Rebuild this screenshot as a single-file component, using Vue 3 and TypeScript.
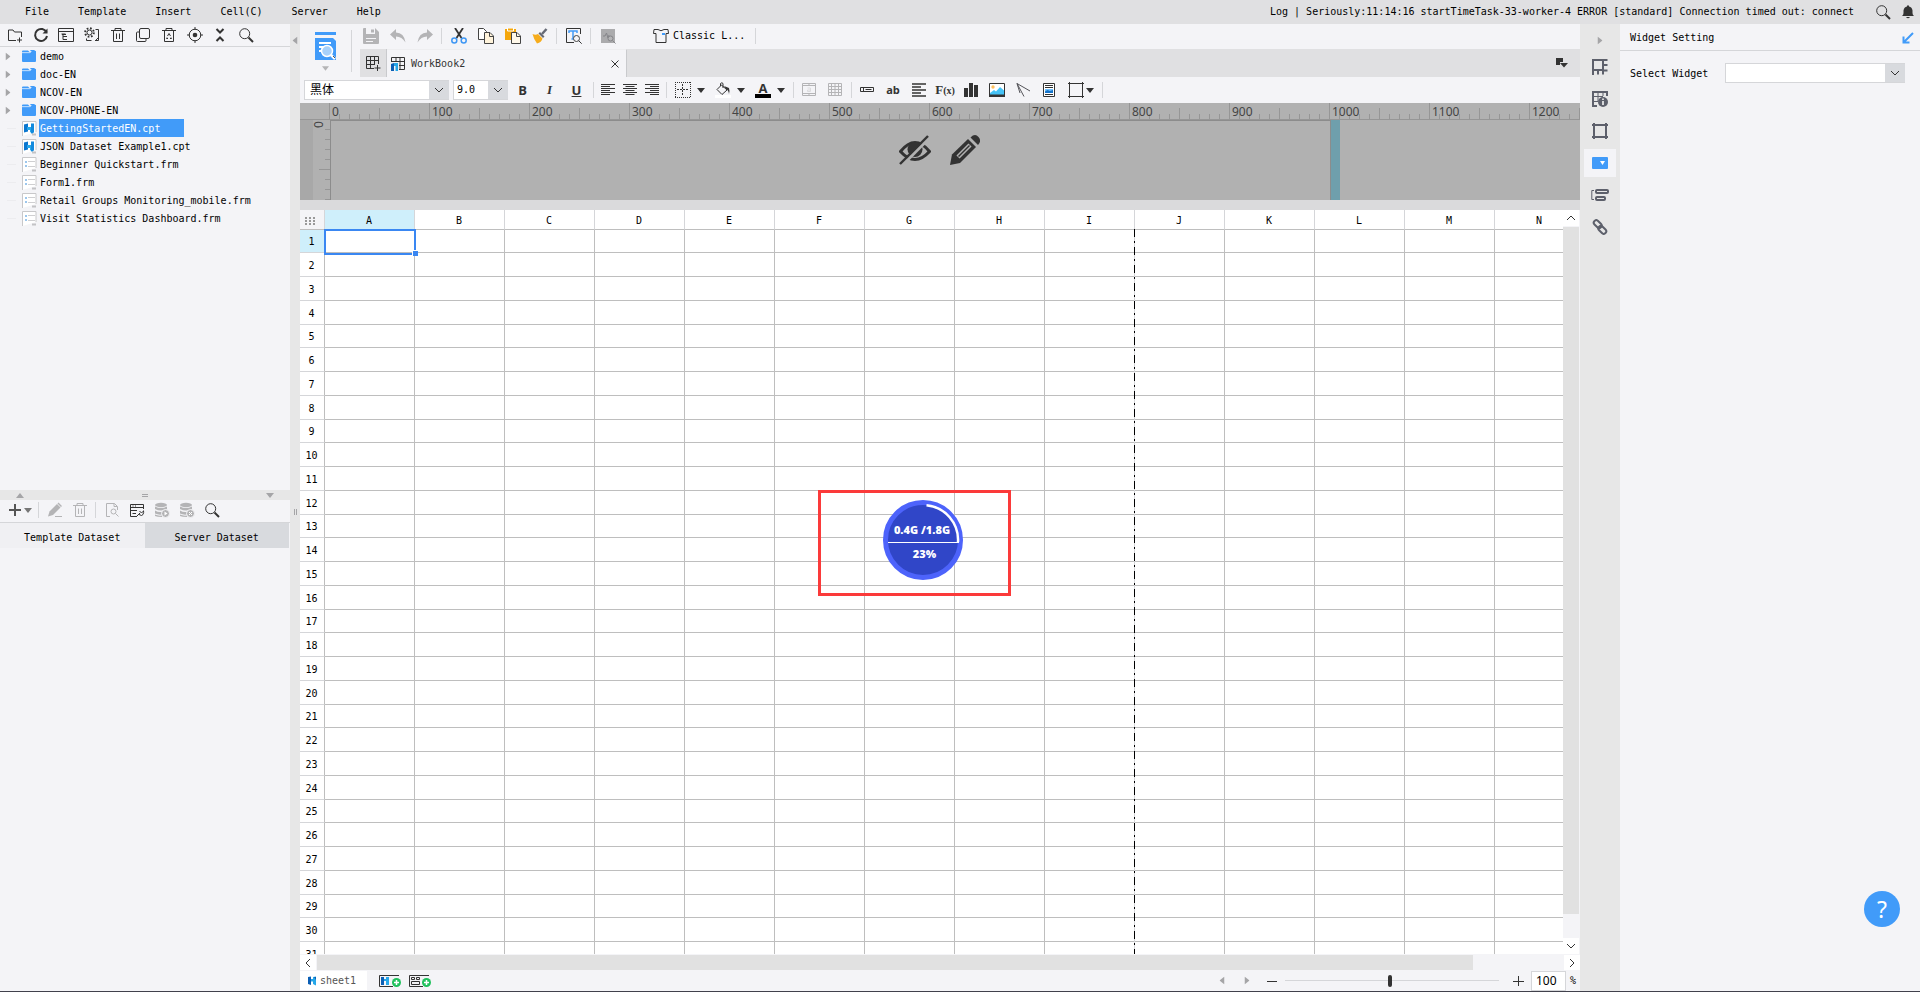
<script setup lang="ts">
import { ref } from 'vue'

interface TreeItem {
  name: string
  icon: string
  folder?: boolean
}

const menus = ['File', 'Template', 'Insert', 'Cell(C)', 'Server', 'Help']

const treeTools = [
  ['folder-add', 'New folder'],
  ['refresh', 'Refresh'],
  ['explorer', 'Show in explorer'],
  ['settings-file', 'File settings'],
  ['trash', 'Delete'],
  ['copies', 'Duplicate'],
  ['recycle', 'Recycle bin'],
  ['target', 'Locate'],
  ['collapse', 'Collapse all'],
  ['search', 'Search'],
]

const tree: TreeItem[] = [
  { name: 'demo', icon: 'folder', folder: true },
  { name: 'doc-EN', icon: 'folder', folder: true },
  { name: 'NCOV-EN', icon: 'folder', folder: true },
  { name: 'NCOV-PHONE-EN', icon: 'folder', folder: true },
  { name: 'GettingStartedEN.cpt', icon: 'cpt' },
  { name: 'JSON Dataset Example1.cpt', icon: 'cpt' },
  { name: 'Beginner Quickstart.frm', icon: 'frm' },
  { name: 'Form1.frm', icon: 'frm' },
  { name: 'Retail Groups Monitoring_mobile.frm', icon: 'frm' },
  { name: 'Visit Statistics Dashboard.frm', icon: 'frm' },
]
const selectedFile = ref('GettingStartedEN.cpt')

const dataTab = ref('Template Dataset')
const dataTabs = ['Template Dataset', 'Server Dataset']

const elementTools = [
  ['widget', 'Widget'],
  ['text-ab', 'Text'],
  ['rich', 'Rich text'],
  ['formula', 'Formula'],
  ['chart', 'Chart'],
  ['image', 'Image'],
  ['slope', 'Slope line'],
  ['subreport', 'Sub report'],
]

const railTools = [
  ['cell-el', 'Cell element'],
  ['cell-attr', 'Cell attributes'],
  ['float', 'Floating element'],
  ['widget-set', 'Widget setting'],
  ['condition', 'Condition attributes'],
  ['link', 'Hyperlink'],
]
const railActive = ref('widget-set')

const marks = Array.from({ length: 13 }, (_, i) => i * 100)
const columns = 'ABCDEFGHIJKLMN'.split('')
const rows = Array.from({ length: 31 }, (_, i) => i + 1)

const family = ref('黑体')
const size = ref('9.0')
const widget = ref('')
const zoom = ref('100')
const zoomPos = ref(49)
</script>

<template>
  <svg class="defs" aria-hidden="true">
    <symbol id="i-folder-add" viewBox="0 0 16 16"><path d="M9 13.500H1.500V3H6l1.500 2h7V10M12.500 10.500v5M10 13h5" class="s" /></symbol>
    <symbol id="i-refresh" viewBox="0 0 16 16"><path d="M13.600 5.500A6 6 0 1 0 14 9" class="s w" /><path d="M14.500 1.500v5h-5z" class="f" /></symbol>
    <symbol id="i-explorer" viewBox="0 0 16 16"><path d="M.5 1.500h15v13H.5zM.5 4.500h15M3.500 7h4M5 7v5.500h4M5 9.500h4" class="s" /><path d="M4 7.500h4M7 9.500h2M7 12.500h2" class="s" /></symbol>
    <symbol id="i-settings-file" viewBox="0 0 16 16"><circle cx="5.500" cy="5.500" r="2.500" class="s" /><circle cx="5.500" cy="5.500" r="4.300" class="s w" stroke-dasharray="1.700 1.680" /><path d="M11.500 2.500h3v11H11M2.500 11.500v2h5M11 14l3-3" class="s" /></symbol>
    <symbol id="i-trash" viewBox="0 0 16 16"><path d="M1 3.500h14M5 3V1.500h6V3M3.500 4v10.500h9V4M6.500 6.500V12M9.500 6.500V12" class="s" /></symbol>
    <symbol id="i-copies" viewBox="0 0 16 16"><rect x="4.500" y="1.500" width="10" height="10" rx="1.500" class="s" /><path d="M4 5H2.500Q1.500 5 1.500 6v7.500q0 1 1 1H10q1 0 1-1V12" class="s" /></symbol>
    <symbol id="i-recycle" viewBox="0 0 16 16"><path d="M1 3.500h14M5 3V1.500h6V3M3.500 4v10.500h9V4" class="s" /><path d="M6.500 9L8 6.500 9.500 9M10 10.500l.5 1H9M7 11.500H5.500l.5-1" class="s" /></symbol>
    <symbol id="i-target" viewBox="0 0 16 16"><circle cx="8" cy="8" r="5.800" class="s" /><circle cx="8" cy="8" r="2.300" class="f" /><path d="M8 0v3M8 13v3M0 8h3M13 8h3" class="s" /></symbol>
    <symbol id="i-collapse" viewBox="0 0 16 16"><path d="M4.500 2L8 5.500 11.500 2M4.500 14L8 10.500l3.500 3.500" class="s w" /></symbol>
    <symbol id="i-search" viewBox="0 0 16 16"><circle cx="6.700" cy="6.700" r="5" class="s" /><path d="M10.500 10.500l4.500 4.500" class="s w" /></symbol>
    <symbol id="i-folder" viewBox="0 0 16 14"><path d="M1 2.500q0-1 1-1h5L8.500 3H1zM9 1h4l2 1.200V3h-4.500z" fill="#419bf9" /><path d="M1 3.500h8l1.500-1H15V12q0 1-1 1H2q-1 0-1-1z" fill="#419bf9" /><path d="M1 3.700h8l1.500-1.200" fill="none" stroke="#bfe0ff" stroke-width=".8" /></symbol>
    <symbol id="i-cpt" viewBox="0 0 16 16"><path d="M1.500 16V1.500H15V12" fill="#fff" stroke="#c8c8ca" /><path d="M3 4.500l4-1v8l-4 1z" fill="#0b76cf" /><path d="M6 7h4l2-1v8l-3-2v-2H6z" fill="#26a7e8" /><path d="M10 3.500h3v9l-3 1z" fill="#1189dd" /><path d="M11 14.500h4" stroke="#c3c3c5" stroke-width="2" /></symbol>
    <symbol id="i-frm" viewBox="0 0 16 16"><path d="M1.500 16V1.500H15V12" fill="#fff" stroke="#c8c8ca" /><path d="M5 5v2M5 9v2" stroke="#3a8fdb" /><path d="M7 5.500h7M7 10.500h7" stroke="#cfcfd1" /><path d="M11 14.500h4" stroke="#c3c3c5" stroke-width="2" /></symbol>
    <symbol id="i-pencil-s" viewBox="0 0 16 16"><path d="M1 14.500l1.500-5L10 2l3.500 3.500L6 13z" class="g" /><path d="M10.500 1.500l1-1 3.500 3.500-1 1zM8 14h7v1H8z" class="g" /></symbol>
    <symbol id="i-trash-g" viewBox="0 0 16 16"><path d="M1 3.500h14M5 3V1.500h6V3M3.500 4v10.500h9V4M6.500 6.500V12M9.500 6.500V12" class="gs" /></symbol>
    <symbol id="i-doc-find" viewBox="0 0 16 16"><path d="M6 14.500H2.500v-13h8l3 3V8M10 1.500v3h3" class="gs" /><circle cx="9.500" cy="9.500" r="2.500" class="gs" /><path d="M11.500 11.500l3 3" class="gs" /></symbol>
    <symbol id="i-data-edit" viewBox="0 0 16 16"><path d="M8 14.500H1.500v-12h13V7M1.500 5.500h13M1.500 8.500H8M3.500 11.500H7M3.500 4h1M6 4h1" class="s" /><path d="M8 14l3-3M10.500 9l2 2 2-2M10 12.500q3 2 4 0t.5-4" class="s" /></symbol>
    <symbol id="i-db-run" viewBox="0 0 16 16"><ellipse cx="7" cy="3" rx="6" ry="2.200" class="g" /><path d="M1 4.500q6 3 12 0V7q-6 3-12 0zM1 8.500q3 2 7 1.500v2.500q-4 .5-7-1zM1 12.500q3 1.500 7 1v1.500q-5 0-7-1z" class="g" /><circle cx="11.500" cy="11.500" r="4" fill="#b4b4b6" stroke="#f4f4f7" /><path d="M10.500 9.500l3 2-3 2z" fill="#fff" /></symbol>
    <symbol id="i-db-del" viewBox="0 0 16 16"><ellipse cx="7" cy="3" rx="6" ry="2.200" class="g" /><path d="M1 4.500q6 3 12 0V7q-6 3-12 0zM1 8.500q3 2 7 1.500v2.500q-4 .5-7-1zM1 12.500q3 1.500 7 1v1.500q-5 0-7-1z" class="g" /><circle cx="11.500" cy="11.500" r="4" fill="#b4b4b6" stroke="#f4f4f7" /><path d="M10 10l3 3M13 10l-3 3" stroke="#fff" /></symbol>
    <symbol id="i-report" viewBox="0 0 22 30"><path d="M0 1h21v3H0z" fill="#419bf9" /><path d="M0 7h18l3 3v19H0z" fill="#419bf9" /><path d="M4 12h12M4 16h8M4 20h3" stroke="#fff" stroke-width="2" /><circle cx="12" cy="20" r="5.500" fill="#a8d1fa" stroke="#fff" stroke-width="1.500" /><path d="M16 24l4 4" stroke="#fff" stroke-width="2.500" /><path d="M18 25l2 2" stroke="#555" /></symbol>
    <symbol id="i-save" viewBox="0 0 16 16"><path d="M0 1q0-1 1-1h11l4 4v11q0 1-1 1H1q-1 0-1-1z" fill="#b4b4b6" /><path d="M3 0h9v6H3z" fill="#f4f4f7" /><path d="M8 1.500h3v3H8z" fill="#b4b4b6" /><path d="M3 10.500h10M3 13.500h7" stroke="#f4f4f7" /></symbol>
    <symbol id="i-undo" viewBox="0 0 16 16"><path d="M0 6.500L6 1v3.500q8 0 9.500 10Q12 8.500 6 8.500V12z" fill="#b4b4b6" /></symbol>
    <symbol id="i-redo" viewBox="0 0 16 16"><path d="M16 6.500L10 1v3.500q-8 0-9.500 10Q4 8.500 10 8.500V12z" fill="#b4b4b6" /></symbol>
    <symbol id="i-cut" viewBox="0 0 16 16"><path d="M4 0l6.500 10M12 0L5.500 10" stroke="#333" stroke-width="1.800" /><circle cx="3.300" cy="12.500" r="2.500" fill="none" stroke="#3f97f4" stroke-width="1.500" /><circle cx="12.700" cy="12.500" r="2.500" fill="none" stroke="#3f97f4" stroke-width="1.500" /></symbol>
    <symbol id="i-copy" viewBox="0 0 16 16"><path d="M.5.5h5l3 3v8h-8z" fill="#fff" stroke="#444" /><path d="M6.500 4.500H12l3.500 3.500v7.500h-9z" fill="#fff3db" stroke="#444" /><path d="M11.500 4.500v4h4" fill="none" stroke="#444" /></symbol>
    <symbol id="i-paste" viewBox="0 0 16 16"><path d="M0 1h11v11H0z" fill="#f5a70c" /><path d="M2.500 0h6v3h-6z" fill="#f5a70c" stroke="#fff" /><path d="M6.500 4.500H12l3.500 3.500v7.500h-9z" fill="#fff8ea" stroke="#444" /><path d="M11.500 4.500v4h4" fill="none" stroke="#444" /></symbol>
    <symbol id="i-brush" viewBox="0 0 16 16"><path d="M14.500 1L10 6" stroke="#666a75" stroke-width="2.500" /><path d="M8 4l4.500 4.500L11 10 6.500 5.500z" fill="#666a75" /><path d="M.5 6q3 1.500 5.500 0l4.500 4.500q-1 4-5.500 5Q2 12 .5 6z" fill="#f6ac1c" /></symbol>
    <symbol id="i-find-t" viewBox="0 0 16 16"><path d="M14.500 6V.5H.5v14H8" class="s" /><path d="M3 5V3h8v2M7 3v8M5.500 11H8" fill="none" stroke="#419bf9" stroke-width="1.500" /><circle cx="10.500" cy="10.500" r="3" fill="#f4f4f7" stroke="#444" /><path d="M12.700 12.700l3 3" class="s" /></symbol>
    <symbol id="i-log" viewBox="0 0 16 16"><path d="M1 1h14v14H1z" fill="#ababad" /><path d="M3 8h2l1.500-3L8 10l1-3" fill="none" stroke="#858589" /><circle cx="10.500" cy="10.500" r="2.500" fill="#b4b4b6" stroke="#858589" /><path d="M12.500 12.500l3 3" stroke="#858589" /></symbol>
    <symbol id="i-shirt" viewBox="0 0 16 16"><path d="M1 1.500h4q3 2.500 6 0h4l.5 4H13v9H3v-9H.5z" class="s" /><path d="M9 6h3" stroke="#419bf9" stroke-width="2" /></symbol>
    <symbol id="i-tab-add" viewBox="0 0 16 16"><path d="M9 13.500H1.500v-12h12V9M1.500 5.500h12M1.500 9.500H10M5.500 1.500v12M9.500 1.500V10M12.500 10v6M9.500 13h6" class="s" /></symbol>
    <symbol id="i-tab-book" viewBox="0 0 16 16"><path d="M1.500 6V1.500h13v12H9M1.500 5.500h13M6 1.500V6M10 1.500v12M9 9.500h5.500" class="s" /><path d="M1 8l3-1v8H1z" fill="#0b5fb5" /><path d="M4 7h4v8H5.500v-5H4z" fill="#26a7e8" /></symbol>
    <symbol id="i-close" viewBox="0 0 10 10"><path d="M1.500 1.500l7 7M8.500 1.500l-7 7" class="s" /></symbol>
    <symbol id="i-tab-list" viewBox="0 0 12 12"><path d="M0 1h7v4H4v3H0zM4 6h8l-4 4.500z" class="f" /></symbol>
    <symbol id="i-left" viewBox="0 0 16 14"><path d="M1 1.500h14M1 3.500h9M1 5.500h14M1 7.500h9M1 9.500h14M1 11.500h9" class="s" /></symbol>
    <symbol id="i-center" viewBox="0 0 16 14"><path d="M1 1.500h14M3.500 3.500h9M1 5.500h14M3.500 7.500h9M1 9.500h14M3.500 11.500h9" class="s" /></symbol>
    <symbol id="i-right" viewBox="0 0 16 14"><path d="M1 1.500h14M6 3.500h9M1 5.500h14M6 7.500h9M1 9.500h14M6 11.500h9" class="s" /></symbol>
    <symbol id="i-border" viewBox="0 0 16 16"><path d="M0 .5h16M0 15.500h16M.5 0v16M15.500 0v16" class="s" stroke-dasharray="1 1" /><path d="M2 7.500h12M7.500 2v12" class="s" stroke-dasharray="2 1" /></symbol>
    <symbol id="i-fill" viewBox="0 0 16 16"><path d="M2 7.500L6.500 3l5.500 5-5 4.500zM5.500 4V1.500q1.500-1.500 2.500 0V6" class="s" /><path d="M9 4l5 2q1 3 0 6-.5-4-3-5z" class="f" /><path d="M0 13h16v3H0z" fill="#fff" /></symbol>
    <symbol id="i-merge" viewBox="0 0 16 16"><path d="M1.500 1.500h13v12h-13zM1.500 3.500h13M1.500 11.500h13M8 1.500V4M8 11v2.500" class="gs" /><path d="M6.500 6h3v3.500h-3V8h3" fill="none" stroke="#dcdcde" /></symbol>
    <symbol id="i-split" viewBox="0 0 16 16"><path d="M1.500 1.500h13v12h-13zM1.500 4.500h13M1.500 7.500h13M1.500 10.500h13M4.500 2v12M8 2v12M11.500 2v12" class="gs" /></symbol>
    <symbol id="i-widget" viewBox="0 0 16 16"><path d="M1.500 5.500h13v4h-13zM4.500 6v4M6.500 7.500h6" class="s" /></symbol>
    <symbol id="i-rich" viewBox="0 0 16 16"><path d="M1 2h14M1 5h9M1 8h14M1 11h9M1 14h14" class="s t" /></symbol>
    <symbol id="i-chart" viewBox="0 0 16 16"><path d="M1 6h4v9H1zM6 1h4v14H6zM11 3h4v12h-4z" class="f" /></symbol>
    <symbol id="i-image" viewBox="0 0 16 16"><path d="M.5 1.500h15v13H.5z" fill="#fff" stroke="#333" /><circle cx="4" cy="5" r="1.700" fill="#ffc05c" /><path d="M1 13V11l4-3 2 1.500L11 5l4 3.500V13z" fill="#45c3f7" /><path d="M0 12.500h16V15H0z" class="f" /></symbol>
    <symbol id="i-slope" viewBox="0 0 16 16"><path d="M9 14.500L2 1.500 15 9M2 1.500L5 11" fill="none" stroke="#55555a" /></symbol>
    <symbol id="i-subreport" viewBox="0 0 16 16"><path d="M2.500 1.500h11v13h-11z" fill="#fff" stroke="#333" /><path d="M4 3.500h8M4 5.500h8M4 12.500h8" class="s" /><path d="M4 7h8v4H4z" fill="#6fc0ff" /><path d="M4 11V9.500L6.500 8 9 9l3-1v3z" fill="#1673c8" /></symbol>
    <symbol id="i-shape" viewBox="0 0 16 16"><path d="M1.500 0v16M14.500 0v16M0 1.500h16M0 14.500h16" class="s" /></symbol>
    <symbol id="i-eye-off" viewBox="0 0 32 30"><path d="M1.500 16.500Q16-1.500 30.500 16.500 16 32.500 1.500 16.500z" fill="none" stroke="#333" stroke-width="3" /><circle cx="16" cy="14.500" r="7.500" fill="#333" /><path d="M3.500 30L30 3.500" stroke="#b1b1b1" stroke-width="3" /><path d="M1 29L29 1" stroke="#333" stroke-width="2.400" /></symbol>
    <symbol id="i-pencil" viewBox="0 0 30 30"><path d="M0 30l2-10.500L18 4l8 8L10 28z" fill="#333" /><path d="M20.500 2.500q4.500-4.500 8-.5t-.5 8z" fill="#333" /><path d="M8 22L20 10" stroke="#b1b1b1" stroke-width="4.500" /><path d="M8.500 21.500l11-11" stroke="#333" stroke-width="1.400" /></symbol>
    <symbol id="i-cell-el" viewBox="0 0 16 16"><path d="M1 16V1h10v10H1M15.500 1H11M15.500 6H11M15.500 11.500H11M6 11v4.500M11 11v4.500" class="r" /></symbol>
    <symbol id="i-cell-attr" viewBox="0 0 16 16"><path d="M5 15H1V1h14v4" class="r" /><path d="M6 2v8M11 2v3M2 5.500h9M2 10.500h4" stroke="#5d606b" /><circle cx="11" cy="11" r="5" fill="#5d606b" /><path d="M11 10v4M11 7.500V9" stroke="#fff" stroke-width="1.500" /></symbol>
    <symbol id="i-float" viewBox="0 0 16 16"><path d="M2 2h12v12H2zM0 2h2M2 0v2M14 0v2h2M2 16v-2H0M14 16v-2h2" class="r" /></symbol>
    <symbol id="i-widget-set" viewBox="0 0 16 16"><rect y="2" width="16" height="12" rx="1" fill="#419bf9" /><path d="M8 6h5l-2.500 4z" fill="#fff" /></symbol>
    <symbol id="i-condition" viewBox="0 0 18 14"><path d="M3 2.500H.8v9H3" fill="none" stroke="#5d606b" /><rect x="5" y="2" width="12" height="3" rx="1" class="r" /><rect x="5" y="9" width="9" height="3" rx="1" class="r" /></symbol>
    <symbol id="i-link" viewBox="0 0 16 16"><rect x="1.200" y="2.600" width="9" height="5" rx="2.500" transform="rotate(45 5.700 5.100)" class="r" /><rect x="5.800" y="8.400" width="9" height="5" rx="2.500" transform="rotate(45 10.300 10.900)" class="r" /></symbol>
    <symbol id="i-bell" viewBox="0 0 12 14"><path d="M0 11q1.500-1 1.500-3V5.500Q2 2 5 1.500V.5h2v1q3 .5 3.500 4V8q0 2 1.500 3zM4 12h4q-2 2.500-4 0z" class="f" /></symbol>
    <symbol id="i-pin" viewBox="0 0 12 12"><path d="M11 1L2 10M1.500 4.500v6h6" fill="none" stroke="#419bf9" stroke-width="2" /></symbol>
    <symbol id="i-chev" viewBox="0 0 10 6"><path d="M1 1l4 4 4-4" class="s" /></symbol>
    <symbol id="i-tri" viewBox="0 0 8 5"><path d="M0 0h8L4 5z" fill="currentColor" /></symbol>
    <symbol id="i-sheet" viewBox="0 0 10 10"><path d="M1 1l3-.5V9L1 8z" fill="#0b5fb5" /><path d="M4 3h2V1l3-.5V9.500L6 8V5.500H4z" fill="#26a7e8" /><path d="M7 1l2 0v3z" fill="#0b5fb5" /></symbol>
    <symbol id="i-add-sheet" viewBox="0 0 22 12"><path d="M20 .5H.5v11H14" class="s" /><path d="M2 2h3v8H2z" fill="#0b5fb5" /><path d="M5 4h2V2h3v8H7V6H5z" fill="#26a7e8" /><circle cx="17.500" cy="7.500" r="4.500" fill="#1fc15c" /><path d="M17.500 5v5M15 7.500h5" stroke="#fff" stroke-width="1.500" /></symbol>
    <symbol id="i-add-form" viewBox="0 0 22 12"><path d="M20 .5H.5v11H14M2.500 2.500h3v2h-3zM7.500 2.500h3v2h-3zM2.500 6.500h8v3h-8z" class="s" /><circle cx="17.500" cy="7.500" r="4.500" fill="#1fc15c" /><path d="M17.500 5v5M15 7.500h5" stroke="#fff" stroke-width="1.500" /></symbol>
    <symbol id="i-plus" viewBox="0 0 12 12"><path d="M6 0v12M0 6h12" stroke="#555" stroke-width="2" /></symbol>
    <symbol id="i-plus-thin" viewBox="0 0 12 12"><path d="M6.500 1v10M1 6.500h11" class="s" /></symbol>
    <symbol id="i-minus" viewBox="0 0 12 12"><path d="M1 6.500h10" class="s" /></symbol>
  </svg>

  <div class="app">
    <header class="menubar">
      <nav class="menus">
        <button v-for="m in menus" :key="m">{{ m }}</button>
      </nav>
      <p class="log">Log | Seriously:11:14:16 startTimeTask-33-worker-4 ERROR [standard] Connection timed out: connect</p>
      <button class="find" aria-label="Search"><svg class="ic"><use href="#i-search" /></svg></button>
      <button aria-label="Notifications"><svg class="bell"><use href="#i-bell" /></svg></button>
    </header>

    <aside class="left">
      <div class="tree-tools">
        <button v-for="[id, label] in treeTools" :key="id" :aria-label="label">
          <svg class="ic"><use :href="`#i-${id}`" /></svg>
        </button>
      </div>
      <ul class="tree">
        <li v-for="item in tree" :key="item.name">
          <svg v-if="item.folder" class="twist"><use href="#i-tri" /></svg>
          <span v-else class="twist-gap" />
          <svg class="ic"><use :href="`#i-${item.icon}`" /></svg>
          <button :class="{ picked: selectedFile === item.name }" @click="selectedFile = item.name">{{ item.name }}</button>
        </li>
      </ul>
      <div class="hsplit">
        <svg class="tri up"><use href="#i-tri" /></svg>
        <span class="grip" />
        <svg class="tri"><use href="#i-tri" /></svg>
      </div>
      <div class="data-tools">
        <button class="add" aria-label="Add dataset">
          <svg class="plus"><use href="#i-plus" /></svg><svg class="drop"><use href="#i-tri" /></svg>
        </button>
        <span class="sep" />
        <button aria-label="Edit"><svg class="ic"><use href="#i-pencil-s" /></svg></button>
        <button aria-label="Delete"><svg class="ic"><use href="#i-trash-g" /></svg></button>
        <span class="sep" />
        <button aria-label="Preview"><svg class="ic"><use href="#i-doc-find" /></svg></button>
        <button aria-label="Connection"><svg class="ic"><use href="#i-data-edit" /></svg></button>
        <button aria-label="Run"><svg class="ic"><use href="#i-db-run" /></svg></button>
        <button aria-label="Clear"><svg class="ic"><use href="#i-db-del" /></svg></button>
        <button aria-label="Search dataset"><svg class="ic"><use href="#i-search" /></svg></button>
      </div>
      <div class="data-tabs">
        <button v-for="t in dataTabs" :key="t" :class="{ on: dataTab === t }" @click="dataTab = t">{{ t }}</button>
      </div>
    </aside>

    <div class="vsplit">
      <svg class="side-tri back"><use href="#i-tri" /></svg>
      <span class="vgrip" />
    </div>

    <main class="main">
      <div class="ribbon">
        <button class="big" aria-label="Preview report">
          <svg class="report"><use href="#i-report" /></svg>
          <svg class="big-tri"><use href="#i-tri" /></svg>
        </button>
        <div class="ribbon-rows">
          <div class="tools first">
            <button aria-label="Save"><svg class="ic"><use href="#i-save" /></svg></button>
            <button aria-label="Undo"><svg class="ic"><use href="#i-undo" /></svg></button>
            <button aria-label="Redo"><svg class="ic"><use href="#i-redo" /></svg></button>
            <span class="sep" />
            <button aria-label="Cut"><svg class="ic"><use href="#i-cut" /></svg></button>
            <button aria-label="Copy"><svg class="ic"><use href="#i-copy" /></svg></button>
            <button aria-label="Paste"><svg class="ic"><use href="#i-paste" /></svg></button>
            <button aria-label="Format painter"><svg class="ic"><use href="#i-brush" /></svg></button>
            <span class="sep" />
            <button aria-label="Find"><svg class="ic"><use href="#i-find-t" /></svg></button>
            <span class="sep" />
            <button aria-label="Monitor"><svg class="ic"><use href="#i-log" /></svg></button>
            <button class="theme"><svg class="ic"><use href="#i-shirt" /></svg>Classic L...</button>
            <span class="sep" />
          </div>
          <div class="books">
            <button class="new-book" aria-label="New workbook"><svg class="ic"><use href="#i-tab-add" /></svg></button>
            <div class="book">
              <svg class="ic"><use href="#i-tab-book" /></svg>
              <span>WorkBook2</span>
              <button aria-label="Close WorkBook2"><svg class="close"><use href="#i-close" /></svg></button>
            </div>
            <button class="book-list" aria-label="All workbooks"><svg class="list"><use href="#i-tab-list" /></svg></button>
          </div>
        </div>
      </div>

      <div class="tools format">
        <div class="combo family">
          <select v-model="family" aria-label="Font"><option>黑体</option></select>
          <span><svg class="chev"><use href="#i-chev" /></svg></span>
        </div>
        <div class="combo size">
          <select v-model="size" aria-label="Font size"><option>9.0</option></select>
          <span><svg class="chev"><use href="#i-chev" /></svg></span>
        </div>
        <button class="glyph">B</button>
        <button class="glyph it">I</button>
        <button class="glyph un">U</button>
        <span class="sep" />
        <button class="al" aria-label="Align left"><svg class="lines"><use href="#i-left" /></svg></button>
        <button class="al" aria-label="Align center"><svg class="lines"><use href="#i-center" /></svg></button>
        <button class="al" aria-label="Align right"><svg class="lines"><use href="#i-right" /></svg></button>
        <span class="sep" />
        <button class="dd" aria-label="Borders"><svg class="ic"><use href="#i-border" /></svg><svg class="drop"><use href="#i-tri" /></svg></button>
        <button class="dd" aria-label="Fill colour"><svg class="ic"><use href="#i-fill" /></svg><svg class="drop"><use href="#i-tri" /></svg></button>
        <button class="dd"><span class="ink">A</span><svg class="drop"><use href="#i-tri" /></svg></button>
        <span class="sep tight" />
        <button aria-label="Merge"><svg class="ic"><use href="#i-merge" /></svg></button>
        <button aria-label="Split"><svg class="ic"><use href="#i-split" /></svg></button>
        <span class="sep tight" />
        <button v-for="[id, label] in elementTools" :key="id" :aria-label="label">
          <b v-if="id === 'text-ab'" class="ab">ab</b>
          <b v-else-if="id === 'formula'" class="fx">F<small>(x)</small></b>
          <svg v-else class="ic"><use :href="`#i-${id}`" /></svg>
        </button>
        <button class="dd shape" aria-label="Shape"><svg class="ic"><use href="#i-shape" /></svg><svg class="drop"><use href="#i-tri" /></svg></button>
        <span class="sep" />
      </div>

      <section class="param">
        <div class="ruler-x">
          <div v-for="m in marks" :key="m" class="mark">{{ m }}</div>
        </div>
        <div class="param-body">
          <div class="ruler-y"><span>0</span></div>
          <div class="pane" />
          <div class="pane-edge" />
        </div>
        <div class="pane-actions">
          <button aria-label="Hide parameter pane"><svg class="eye"><use href="#i-eye-off" /></svg></button>
          <button aria-label="Edit parameter pane"><svg class="pen"><use href="#i-pencil" /></svg></button>
        </div>
      </section>

      <section class="sheet">
        <div class="cells">
          <table>
            <thead>
              <tr>
                <th class="corner" aria-label="Select all"><i /></th>
                <th v-for="c in columns" :key="c" :class="{ active: c === 'A' }">{{ c }}</th>
              </tr>
            </thead>
            <tbody>
              <tr v-for="r in rows" :key="r">
                <th :class="{ active: r === 1 }">{{ r }}</th>
                <td v-for="c in columns" :key="c" />
              </tr>
            </tbody>
          </table>
          <div class="cursor" />
          <div class="page-break" />
          <div class="memory">
            <div class="gauge">
              <svg viewBox="0 0 80 80">
                <circle cx="40" cy="40" r="37.500" fill="#3046c8" stroke="#4d63fb" stroke-width="5" />
                <path d="M43.500 5.200A35 35 0 0 1 75 42" fill="none" stroke="#fff" stroke-width="2.500" />
                <path d="M5 42.500h71" stroke="#fff" />
              </svg>
              <b>0.4G /1.8G</b>
              <b>23%</b>
            </div>
          </div>
        </div>
        <div class="scroll-y">
          <button aria-label="Scroll up"><svg class="chev flip"><use href="#i-chev" /></svg></button>
          <span />
          <button aria-label="Scroll down"><svg class="chev"><use href="#i-chev" /></svg></button>
        </div>
      </section>

      <div class="scroll-x">
        <button aria-label="Scroll left"><svg class="chev to-left"><use href="#i-chev" /></svg></button>
        <span />
        <button aria-label="Scroll right"><svg class="chev to-right"><use href="#i-chev" /></svg></button>
      </div>

      <footer class="foot">
        <button class="sheet-tab"><svg class="mini"><use href="#i-sheet" /></svg>sheet1</button>
        <button class="add-sheet" aria-label="Add sheet"><svg><use href="#i-add-sheet" /></svg></button>
        <button class="add-sheet" aria-label="Add form sheet"><svg><use href="#i-add-form" /></svg></button>
        <div class="zoom">
          <button aria-label="Previous sheet"><svg class="side-tri back"><use href="#i-tri" /></svg></button>
          <button aria-label="Next sheet"><svg class="side-tri"><use href="#i-tri" /></svg></button>
          <button aria-label="Zoom out"><svg class="pm"><use href="#i-minus" /></svg></button>
          <input v-model="zoomPos" type="range" min="0" max="100" aria-label="Zoom" />
          <button class="in" aria-label="Zoom in"><svg class="pm"><use href="#i-plus-thin" /></svg></button>
          <input id="zoom" v-model="zoom" type="text" />
          <label for="zoom">%</label>
        </div>
      </footer>
    </main>

    <nav class="rail">
      <svg class="side-tri"><use href="#i-tri" /></svg>
      <button
        v-for="[id, label] in railTools"
        :key="id"
        :aria-label="label"
        :class="{ on: railActive === id }"
        @click="railActive = id"
      >
        <svg class="ic" :class="{ wide: id === 'condition' }"><use :href="`#i-${id}`" /></svg>
      </button>
    </nav>

    <aside class="props">
      <h2>
        Widget Setting
        <button aria-label="Detach panel"><svg class="pin"><use href="#i-pin" /></svg></button>
      </h2>
      <div class="field">
        <label for="widget">Select Widget</label>
        <div class="combo">
          <select id="widget" v-model="widget"><option value="" /></select>
          <span><svg class="chev"><use href="#i-chev" /></svg></span>
        </div>
      </div>
      <button class="help">?</button>
    </aside>
  </div>
</template>

<style>
body {
  margin: 0;
}
</style>

<style scoped>
.defs {
  position: absolute;
  width: 0;
  height: 0;
}
.s {
  fill: none;
  stroke: #333;
}
.w {
  stroke-width: 2;
}
.t {
  stroke-width: 1.5;
}
.f {
  fill: #333;
}
.g {
  fill: #b4b4b6;
}
.gs {
  fill: none;
  stroke: #b4b4b6;
}
.r {
  fill: none;
  stroke: #5d606b;
  stroke-width: 2;
}
.app {
  display: grid;
  grid-template: 24px minmax(0, 1fr) / 290px 10px minmax(0, 1fr) 40px 300px;
  box-sizing: border-box;
  height: 100vh;
  border-bottom: 1px solid #41414c;
  background: #f4f4f7;
  color: #000;
  font: 10px/18px "DejaVu Sans Mono", "Noto Sans CJK SC", monospace;
}
button,
select,
input {
  box-sizing: border-box;
  margin: 0;
  padding: 0;
  border: 0;
  border-radius: 0;
  background: none;
  color: inherit;
  font: inherit;
}
button {
  display: flex;
  align-items: center;
  justify-content: center;
}
svg {
  display: block;
  flex: none;
}
.ic {
  width: 16px;
  height: 16px;
}
.sep {
  flex: none;
  width: 1px;
  height: 16px;
  margin: 0 3px;
  background: #d5d6d9;
}
.tight {
  margin: 0 2px 0 3px;
}

/* menu bar */
.menubar {
  grid-column: 1 / -1;
  display: flex;
  align-items: center;
  padding: 0 6px 0 25px;
  background: #e0e0e2;
}
.menus {
  display: flex;
  flex: 1;
  gap: 29px;
}
.log {
  margin: 0 21px 0 0;
  white-space: nowrap;
}
.find {
  margin-right: 11px;
}
.bell {
  width: 12px;
  height: 14px;
}

/* left column */
.left {
  display: flex;
  flex-direction: column;
  min-height: 0;
}
.tree-tools {
  display: flex;
  justify-content: space-between;
  align-items: center;
  height: 22px;
  padding: 0 36px 0 7px;
  border-bottom: 1px solid #d5d6d9;
}
.tree {
  flex: 1;
  margin: 0;
  padding: 0;
  overflow: hidden;
  list-style: none;
}
.tree li {
  display: flex;
  align-items: center;
  height: 18px;
}
.twist {
  width: 8px;
  height: 5px;
  margin: 0 9px 0 4px;
  color: #a5a5a7;
  transform: rotate(-90deg);
}
.twist-gap {
  width: 9px;
  height: 1px;
  margin: 0 5px 0 7px;
  background: #ececef;
}
.tree button {
  height: 18px;
  margin-left: 2px;
  padding: 2px 1px 0;
  line-height: 16px;
}
.tree .picked {
  padding-right: 24px;
  background: #419bf9;
  color: #fff;
}
.hsplit {
  display: flex;
  justify-content: space-between;
  align-items: center;
  height: 10px;
  padding: 0 16px;
  background: #e7e7e7;
  color: #a5a5a7;
}
.tri {
  width: 8px;
  height: 5px;
}
.up {
  transform: rotate(180deg);
}
.grip {
  width: 6px;
  height: 1px;
  border: solid #a5a5a7;
  border-width: 1px 0;
}
.data-tools {
  display: flex;
  align-items: center;
  box-sizing: border-box;
  height: 23px;
  padding: 0 0 2px 9px;
  border-bottom: 1px solid #d5d6d9;
}
.data-tools button {
  width: 25px;
}
.data-tools .add {
  gap: 3px;
  width: 26px;
  justify-content: flex-start;
  color: #777;
}
.plus {
  width: 12px;
  height: 12px;
}
.drop {
  width: 8px;
  height: 5px;
}
.data-tabs {
  display: grid;
  grid-template-columns: 1fr 1fr;
  height: 468px;
  padding-right: 1px;
}
.data-tabs button {
  height: 25px;
  padding-top: 4px;
  background: #d8dade;
}
.data-tabs .on {
  background: #f0f0f3;
}
.vsplit {
  display: flex;
  flex-direction: column;
  align-items: center;
  padding-top: 14px;
  background: #e7e7e7;
}
.side-tri {
  width: 8px;
  height: 5px;
  color: #a5a5a7;
  transform: rotate(-90deg);
}
.back {
  transform: rotate(90deg);
}
.vgrip {
  width: 1px;
  height: 6px;
  margin-top: 466px;
  border: solid #a5a5a7;
  border-width: 0 1px;
}

/* centre */
.main {
  position: relative;
  display: flex;
  flex-direction: column;
  min-width: 0;
  min-height: 0;
}
.ribbon {
  display: flex;
}
.big {
  flex-direction: column;
  gap: 5px;
  width: 52px;
  margin: 6px 0 5px;
  border-right: 1px solid #d5d6d9;
}
.report {
  width: 22px;
  height: 30px;
}
.big-tri {
  width: 7px;
  height: 5px;
  color: #b4b4b6;
}
.ribbon-rows {
  flex: 1;
  min-width: 0;
}
.tools {
  display: flex;
  align-items: center;
}
.tools button {
  width: 26px;
}
.first {
  box-sizing: border-box;
  height: 25px;
  padding: 0 0 1px 5px;
}
.first button {
  width: 27px;
}
.first .theme {
  gap: 4px;
  width: auto;
  margin: 0 7px 0 32px;
}
.books {
  display: flex;
  height: 28px;
  margin-left: 8px;
  background: #e0e0e2;
}
.new-book {
  width: 27px;
  border-right: 1px solid #c9cacd;
}
.book {
  display: flex;
  align-items: center;
  gap: 5px;
  width: 240px;
  box-sizing: border-box;
  padding: 0 6px 0 3px;
  border-top: 1px solid #eeeef0;
  border-right: 1px solid #c9cacd;
  background: #f4f4f7;
  color: #333;
}
.book span {
  flex: 1;
}
.close {
  width: 10px;
  height: 10px;
}
.book-list {
  margin: 0 12px 0 auto;
}
.list {
  width: 12px;
  height: 12px;
}
.format {
  height: 26px;
  padding-left: 4px;
}
.combo {
  display: grid;
  grid-template-columns: 1fr 20px;
  height: 20px;
  box-sizing: border-box;
  border: 1px solid #d5d6d9;
  border-right: 0;
  background: #fff;
}
.combo select {
  grid-area: 1 / 1 / 2 / 3;
  padding-left: 5px;
  appearance: none;
}
.combo span {
  display: grid;
  grid-area: 1 / 2;
  place-items: center;
  background: #d8dade;
  pointer-events: none;
}
.chev {
  width: 10px;
  height: 6px;
}
.family {
  width: 145px;
  margin-right: 4px;
}
.family select {
  font-size: 12px;
}
.size {
  width: 55px;
  margin-right: 1px;
}
.size select {
  padding-left: 3px;
}
.format .glyph {
  width: 27px;
  color: #333;
  font: bold 13px/18px "Open Sans", sans-serif;
}
.format .it {
  font-family: "Liberation Serif", serif;
  font-style: italic;
}
.un {
  text-decoration: underline;
}
.format .al {
  width: 22px;
}
.lines {
  width: 16px;
  height: 14px;
}
.format .dd {
  gap: 6px;
  width: 40px;
  color: #333;
}
.ink {
  width: 16px;
  border-bottom: 4px solid #000;
  font: bold 13px/12px "Open Sans", sans-serif;
}
.ab {
  color: #333;
  font: bold 11px/16px "Open Sans", sans-serif;
}
.fx {
  color: #333;
  font: bold 13px/16px "Liberation Serif", serif;
}
.fx small {
  font-size: 10px;
}
.format .shape {
  gap: 2px;
  width: 37px;
}

/* parameter pane */
.param {
  position: relative;
  height: 97px;
  border-bottom: 10px solid #dadadc;
  background: #b1b1b1;
  overflow: hidden;
}
.ruler-x {
  display: flex;
  height: 16px;
  padding-left: 29px;
  border-bottom: 1px solid #969696;
}
.mark {
  flex: none;
  box-sizing: border-box;
  width: 100px;
  border-left: 1px solid #969696;
  padding-left: 2px;
  background:
    linear-gradient(#969696, #969696) 49px 100% / 1px 11px no-repeat,
    repeating-linear-gradient(90deg, transparent 0 9px, #969696 9px 10px) 0 100% / 99px 5px no-repeat;
  color: #444;
  font: 12px/17px "Noto Sans", sans-serif;
}
.param-body {
  display: flex;
  height: 80px;
}
.ruler-y {
  display: flex;
  justify-content: center;
  box-sizing: border-box;
  width: 31px;
  border-left: 13px solid #a8a8a8;
  border-right: 1px solid #8c8c8c;
  background:
    linear-gradient(#969696, #969696) 100% 49px / 11px 1px no-repeat,
    repeating-linear-gradient(transparent 0 9px, #969696 9px 10px) 100% 0 / 5px 80px no-repeat;
}
.ruler-y span {
  height: 9px;
  margin-right: 6px;
  color: #444;
  font: 12px/9px "Noto Sans", sans-serif;
  transform: rotate(-90deg);
}
.pane {
  box-sizing: border-box;
  width: 1000px;
  border: solid #8c8c8c;
  border-width: 1px 1px 0 0;
}
.pane-edge {
  width: 9px;
  background: #6f9fac;
}
.pane-actions {
  position: absolute;
  inset: 16px 0 0;
  display: flex;
  justify-content: center;
  align-items: center;
  gap: 19px;
  padding: 0 2px 20px 0;
}
.eye {
  width: 32px;
  height: 30px;
}
.pen {
  width: 30px;
  height: 30px;
}

/* grid */
.sheet {
  display: flex;
  flex: 1;
  min-height: 0;
  background: #fff;
}
.cells {
  position: relative;
  flex: 1;
  min-width: 0;
  overflow: hidden;
}
table {
  table-layout: fixed;
  width: 1285px;
  border-spacing: 0;
}
th,
td {
  box-sizing: border-box;
  width: 90px;
  padding: 0;
  border: solid #bebebe;
  border-width: 0 1px 1px 0;
}
th {
  padding: 2px 1px 0 0;
  font-weight: normal;
  line-height: 16px;
}
thead th {
  height: 20px;
  padding-top: 3px;
  border-right-color: #d5d6d9;
}
tbody th {
  border-bottom-color: #d5d6d9;
}
tr {
  height: 24px;
}
thead tr {
  height: 20px;
}
tbody tr:nth-child(4n + 1) {
  height: 23px;
}
.corner {
  width: 25px;
  background: #f4f4f7;
}
.corner i {
  display: block;
  width: 10px;
  height: 8px;
  margin-left: 5px;
  background: repeating-linear-gradient(90deg, transparent 0 2px, #f4f4f7 2px 4px), repeating-linear-gradient(#999 0 2px, transparent 2px 3px);
}
.active {
  background: #cfeffb;
}
.cursor {
  position: absolute;
  top: 19px;
  left: 24px;
  width: 88px;
  height: 22px;
  border: 2px solid #3a87f2;
}
.cursor::after {
  content: "";
  position: absolute;
  right: -4px;
  bottom: -3px;
  width: 5px;
  height: 5px;
  border: solid #fff;
  border-width: 1px 0 0 1px;
  background: #3a87f2;
}
.page-break {
  position: absolute;
  top: 19px;
  bottom: 0;
  left: 834px;
  width: 1px;
  background: repeating-linear-gradient(#000 0 8px, #d5d6d9 8px 12px, #000 12px 14px, #d5d6d9 14px 18px);
}
.memory {
  position: absolute;
  top: 280px;
  left: 518px;
  box-sizing: border-box;
  width: 193px;
  height: 106px;
  padding: 7px 0 0 62px;
  border: 3px solid #fb3a3a;
}
.gauge {
  display: grid;
  grid-template: 19px 24px 24px / 80px;
  width: 80px;
  height: 80px;
  color: #fff;
  font: bold 11px/22px "Noto Sans", sans-serif;
  text-align: center;
  white-space: nowrap;
}
.gauge svg {
  grid-area: 1 / 1 / 4 / 2;
  width: 80px;
  height: 80px;
}
.gauge b {
  grid-column: 1;
}
.gauge b:nth-of-type(1) {
  grid-row: 2;
  padding-right: 2px;
}
.gauge b:nth-of-type(2) {
  grid-row: 3;
  padding-left: 3px;
}
.scroll-y {
  display: flex;
  flex-direction: column;
  align-items: flex-start;
  width: 17px;
  background: #f4f4f7;
}
.scroll-y button {
  width: 16px;
  height: 16px;
  background: #fff;
}
.scroll-y span {
  width: 16px;
  height: calc(100% - 57px);
  margin: 1px 0 auto;
  background: #e1e1e1;
}
.flip {
  transform: rotate(180deg);
}
.to-left {
  transform: rotate(90deg);
}
.to-right {
  transform: rotate(-90deg);
}
.scroll-x {
  display: flex;
  height: 15px;
  padding-top: 1px;
}
.scroll-x button {
  width: 16px;
  background: #fff;
}
.scroll-x span {
  width: calc(100% - 124px);
  margin: 0 auto 0 1px;
  background: #e1e1e1;
}
.foot {
  display: flex;
  align-items: center;
  height: 21px;
}
.sheet-tab {
  gap: 3px;
  justify-content: flex-start;
  width: 67px;
  height: 19px;
  margin-right: 12px;
  padding-left: 7px;
  background: #fff;
  color: #555;
}
.mini {
  width: 10px;
  height: 10px;
}
.add-sheet {
  width: 30px;
  justify-content: flex-start;
}
.add-sheet svg {
  width: 22px;
  height: 12px;
}
.zoom {
  display: flex;
  align-items: center;
  gap: 17px;
  margin-left: auto;
}
.zoom button {
  width: 8px;
}
.pm {
  width: 12px;
  height: 12px;
}
.zoom input[type="range"] {
  width: 214px;
  height: 14px;
  margin: 0 -7px 0 -8px;
  appearance: none;
  background: linear-gradient(#d5d6d9, #d5d6d9) 0 50% / 100% 1px no-repeat;
}
.zoom input[type="range"]::-webkit-slider-thumb {
  width: 4px;
  height: 12px;
  appearance: none;
  border-radius: 2px;
  background: #333;
}
.zoom .in {
  margin: 0 -8px 0 5px;
}
.zoom input[type="text"] {
  width: 35px;
  height: 20px;
  padding-left: 4px;
  border: 1px solid #d5d6d9;
  background: #fff;
  font: 12px/18px "Noto Sans", sans-serif;
}
.zoom label {
  margin: 0 4px 0 -13px;
}

/* right side */
.rail {
  display: flex;
  flex-direction: column;
  align-items: center;
  gap: 4px;
  padding-top: 14px;
  background: #e7e7e7;
}
.rail button {
  width: 32px;
  height: 28px;
}
.rail > .side-tri {
  margin-bottom: 6px;
}
.rail .on {
  background: #f4f4f7;
}
.wide {
  width: 18px;
}
.props {
  display: flex;
  flex-direction: column;
}
h2 {
  display: flex;
  justify-content: space-between;
  align-items: center;
  box-sizing: border-box;
  height: 27px;
  margin: 0;
  padding: 2px 6px 0 10px;
  border-bottom: 1px solid #d5d6d9;
  font: inherit;
}
.pin {
  width: 12px;
  height: 12px;
}
.field {
  display: flex;
  align-items: center;
  padding: 12px 15px 0 10px;
}
.field label {
  width: 95px;
  padding-top: 1px;
}
.field .combo {
  flex: 1;
}
.help {
  width: 36px;
  height: 36px;
  margin: auto 20px 64px auto;
  border-radius: 50%;
  background: #419bf9;
  color: #fff;
  font: 23px/36px "Noto Sans", sans-serif;
}
</style>
